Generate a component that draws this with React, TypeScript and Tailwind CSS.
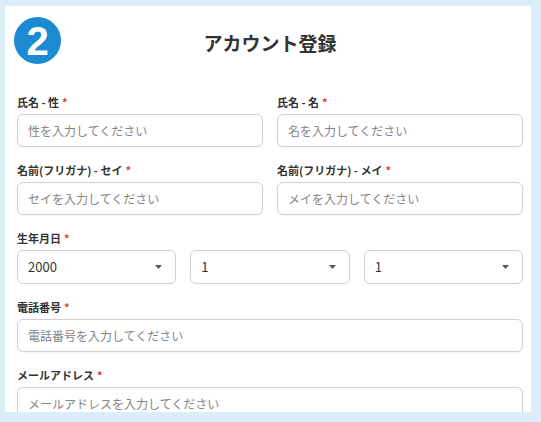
import React from "react";

const font = { fontFamily: '"Noto Sans CJK JP", "Noto Sans", sans-serif' };

const Label: React.FC<{ text: string }> = ({ text }) => (
  <div className="h-[16px] mb-[4px] flex items-center text-[11px] font-bold text-[#333]">
    {text}
    <span className="ml-[3px] text-[#e53935]">*</span>
  </div>
);

const TextInput: React.FC<{ placeholder: string }> = ({ placeholder }) => (
  <input
    type="text"
    placeholder={placeholder}
    className="w-full h-[33px] px-[10px] rounded-[6px] border border-[#d0d0d0] bg-white text-[12px] text-[#333] placeholder:text-[#858585] shadow-[0_1px_1px_rgba(0,0,0,0.04)] outline-none"
  />
);

const SelectBox: React.FC<{ value: string }> = ({ value }) => (
  <div className="flex-1 h-[34px] px-[10px] flex items-center justify-between rounded-[6px] border border-[#d0d0d0] bg-white text-[13px] text-[#333]">
    <span>{value}</span>
    <svg width="7" height="4" viewBox="0 0 7 4" className="mr-[3px]">
      <path d="M0 0 L7 0 L3.5 4 Z" fill="#555" />
    </svg>
  </div>
);

const App: React.FC = () => {
  return (
    <div className="w-[541px] h-[422px] overflow-hidden bg-[#dcedfa] pt-[6px] pl-[5px] pr-[10px]" style={font}>
      <div className="h-[406px] overflow-hidden bg-white pl-[12px] pr-[8px] pt-[11px]">
        {/* ヘッダー */}
        <div className="flex items-center h-[47px]">
          <div className="-ml-[3px] w-[47px] h-[47px] rounded-full bg-[#1c8bd2] flex items-center justify-center">
            <span
              className="text-white text-[40px] font-bold leading-none"
              style={{ fontFamily: '"Liberation Sans", Arial, sans-serif' }}
            >
              2
            </span>
          </div>
          <h1 className="flex-1 text-center text-[19px] font-semibold text-[#333] pt-[6px]">アカウント登録</h1>
          <div className="w-[44px]" />
        </div>

        <div className="mt-[30px] flex flex-col gap-[15px]">
          <div className="grid grid-cols-2 gap-[14px]">
            <div>
              <Label text="氏名 - 性" />
              <TextInput placeholder="性を入力してください" />
            </div>
            <div>
              <Label text="氏名 - 名" />
              <TextInput placeholder="名を入力してください" />
            </div>
          </div>

          <div className="grid grid-cols-2 gap-[14px]">
            <div>
              <Label text="名前(フリガナ) - セイ" />
              <TextInput placeholder="セイを入力してください" />
            </div>
            <div>
              <Label text="名前(フリガナ) - メイ" />
              <TextInput placeholder="メイを入力してください" />
            </div>
          </div>

          <div>
            <Label text="生年月日" />
            <div className="flex gap-[14px]">
              <SelectBox value="2000" />
              <SelectBox value="1" />
              <SelectBox value="1" />
            </div>
          </div>

          <div>
            <Label text="電話番号" />
            <TextInput placeholder="電話番号を入力してください" />
          </div>

          <div>
            <Label text="メールアドレス" />
            <TextInput placeholder="メールアドレスを入力してください" />
          </div>
        </div>
      </div>
    </div>
  );
};

export default App;
